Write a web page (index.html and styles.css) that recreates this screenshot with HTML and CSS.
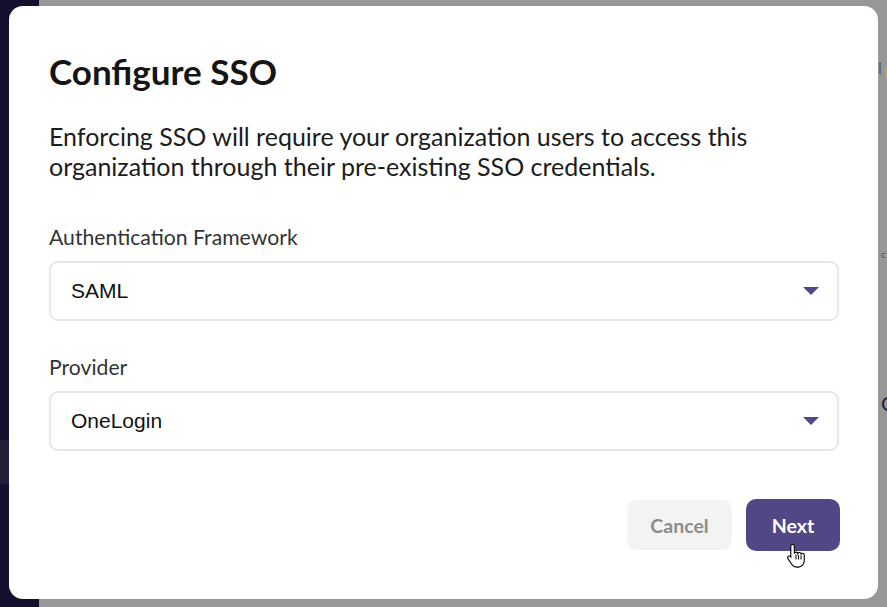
FILE: index.html
```html
<!DOCTYPE html>
<html lang="en">
<head>
  <meta charset="UTF-8" />
  <title>Configure SSO</title>
  <link rel="stylesheet" href="styles.css">
</head>
<body>
  <div class="backdrop">
    <div class="side-nav"><div class="side-item"></div></div>
    <div class="page">
      <span class="peek peek-a"></span>
      <span class="peek peek-b"></span>
      <span class="peek-text peek-c">c</span>
      <span class="peek-text peek-d">C</span>
    </div>
  </div>

  <div class="modal" role="dialog" aria-labelledby="ssoTitle">
    <h1 id="ssoTitle">Configure SSO</h1>
    <p class="intro">Enforcing SSO will require your organization users to access this organization through their pre-existing SSO credentials.</p>

    <div class="field">
      <label for="framework">Authentication Framework</label>
      <div class="select">
        <span id="framework">SAML</span>
        <svg class="caret" width="16" height="8" viewBox="0 0 16 8"><path d="M0 0h16L8 8z"/></svg>
      </div>
    </div>

    <div class="field">
      <label for="provider">Provider</label>
      <div class="select">
        <span id="provider">OneLogin</span>
        <svg class="caret" width="16" height="8" viewBox="0 0 16 8"><path d="M0 0h16L8 8z"/></svg>
      </div>
    </div>

    <div class="actions">
      <button class="btn btn-cancel">Cancel</button>
      <button class="btn btn-next">Next</button>
    </div>

    <!-- mouse pointer over the Next button -->
    <svg class="pointer" width="18" height="25" viewBox="0 0 18 25">
      <path d="M5.5 1.5c1 0 1.8.8 1.8 1.8v7.2c.3-.9 1-1.4 1.8-1.4.9 0 1.6.6 1.7 1.5.3-.7 1-1.1 1.7-1.1.9 0 1.600.7 1.7 1.6.3-.5.8-.8 1.4-.8 1 0 1.7.8 1.7 1.8v5.4c0 3.700-2.5 6.6-6 6.6H9.6c-2 0-3.4-.8-4.6-2.4L1 15.6c-.6-.8-.4-1.8.3-2.3.8-.5 1.7-.3 2.3.4l.2.3V3.3c0-1 .8-1.8 1.7-1.8z" fill="#fff" stroke="#000" stroke-width="1.1"/>
      <path d="M9 11.5v5M11.5 12v4.5M14 12.6v3.9" stroke="#000" stroke-width="1"/>
    </svg>
  </div>
</body>
</html>
```

FILE: styles.css
```css
:root {
  --backdrop: #979797;
  --nav: #150f2d;
  --fg: #1c1c1c;
  --label: #333333;
  --border: #e6e6eb;
  --accent: #524785;
  --muted-bg: #f3f3f3;
  --muted-fg: #8c8c8c;
}

* {
  box-sizing: border-box;
}

body {
  margin: 0;
  width: 887px;
  height: 607px;
  overflow: hidden;
  font-family: Lato, 'Open Sans', sans-serif;
  color: var(--fg);
  position: relative;
}

.backdrop {
  display: flex;
  height: 100%;
}

.side-nav {
  width: 39px;
  background: var(--nav);
  padding-top: 440px;
}

.side-item {
  height: 44px;
  background: #241e3a;
}

.page {
  flex: 1;
  background: var(--backdrop);
  position: relative;
}

.peek {
  position: absolute;
  width: 2px;
  height: 12px;
  top: 62px;
}

.peek-a {
  left: 840px;
  background: #5e6f80;
}

.peek-b {
  left: 846px;
  background: #b7a072;
  top: 66px;
}

.peek-text {
  position: absolute;
  left: 842px;
  font-size: 14px;
  color: #4d4d66;
}

.peek-c {
  top: 248px;
  font-size: 10px;
}

.peek-d {
  top: 391px;
  font-size: 20px;
  color: #1f1a3d;
}

.modal {
  position: absolute;
  left: 9px;
  top: 6px;
  width: 869px;
  height: 593px;
  background: #ffffff;
  border-radius: 14px;
  padding: 44px 40px 0;
}

h1 {
  margin: 0 0 29px;
  font-size: 35px;
  font-weight: 700;
  line-height: 42px;
  color: #151515;
}

.intro {
  margin: 0 0 44px;
  font-size: 25px;
  line-height: 30px;
}

.field {
  margin-bottom: 34px;
}

label {
  display: block;
  font-size: 21.2px;
  line-height: 24px;
  color: var(--label);
  margin-bottom: 12px;
}

.select {
  display: flex;
  align-items: center;
  justify-content: space-between;
  height: 60px;
  width: 790px;
  border: 2px solid var(--border);
  border-radius: 9px;
  padding: 0 18px 0 20px;
  font-family: 'Liberation Sans', Arial, sans-serif;
  font-size: 21px;
  color: #111;
}

.caret {
  fill: var(--accent);
}

.actions {
  display: flex;
  justify-content: flex-end;
  align-items: center;
  gap: 14px;
  width: 791px;
  margin-top: 48px;
}

.btn {
  font-family: Lato, 'Open Sans', sans-serif;
  font-size: 19.5px;
  font-weight: 700;
  border: none;
  border-radius: 10px;
  cursor: pointer;
}

.btn-cancel {
  width: 105px;
  height: 50px;
  background: var(--muted-bg);
  color: var(--muted-fg);
}

.btn-next {
  width: 94px;
  height: 52px;
  background: var(--accent);
  color: #ffffff;
}

.pointer {
  position: absolute;
  left: 778px;
  top: 537px;
}
```
